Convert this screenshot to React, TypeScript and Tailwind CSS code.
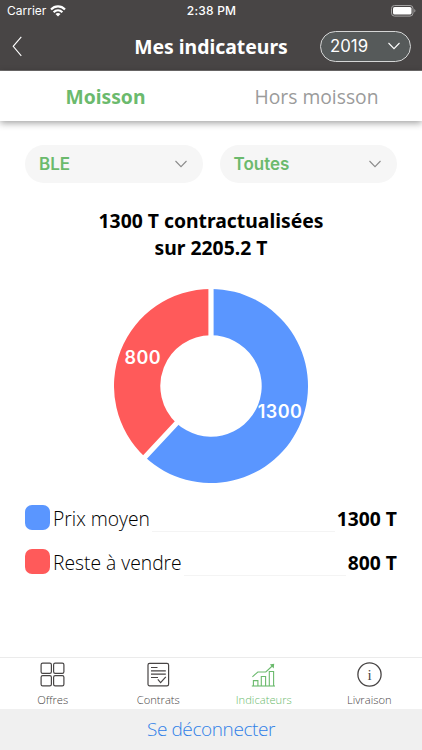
import React, { useState } from 'react';

interface Slice {
  label: string;
  value: number;
  color: string;
  labelX: number;
  labelY: number;
}

const slices: Slice[] = [
  { label: 'Prix moyen', value: 1300, color: '#5a96ff', labelX: 166, labelY: 129.4 },
  { label: 'Reste à vendre', value: 800, color: '#ff5a5a', labelX: 28.7, labelY: 75.4 },
];

const Chevron = ({ className }: { className?: string }) => (
  <svg width="12" height="8" viewBox="0 0 12 8" fill="none" stroke="currentColor" strokeWidth="1.1" className={className}>
    <path d="M0.5 1 L6 6.6 L11.5 1" />
  </svg>
);

const StatusBar = () => (
  <div className="flex h-[21px] items-center justify-between pl-[7px] pr-[6px] font-['Inter','Liberation_Sans',sans-serif] text-[12px] text-white">
    <div className="flex flex-1 items-center gap-1">
      <span>Carrier</span>
      <svg width="16" height="12" viewBox="0 0 16 12" fill="none" stroke="white" strokeWidth="2.2">
        <path d="M1 4.4 C5 0.3 11 0.3 15 4.4" />
        <path d="M3.6 7.2 C6.2 4.7 9.8 4.7 12.4 7.2" />
        <path d="M8 11.6 L5.5 9 C7 7.8 9 7.8 10.5 9 Z" fill="white" stroke="none" />
      </svg>
    </div>
    <span className="font-medium tracking-[0.2px]">2:38 PM</span>
    <div className="flex flex-1 justify-end">
      <svg width="25" height="12" viewBox="0 0 25 12" fill="none">
        <rect x="0.5" y="0.5" width="21.5" height="10.6" rx="3" stroke="#a3a2a2" />
        <rect x="2" y="2" width="18.5" height="7.6" rx="1.6" fill="white" />
        <path d="M23.3 4 C24.8 4.6 24.8 7 23.3 7.6 Z" fill="#a3a2a2" />
      </svg>
    </div>
  </div>
);

const Donut = () => {
  const total = slices.reduce((sum, s) => sum + s.value, 0);
  const point = (angle: number, r: number) => `${97 + r * Math.sin(angle)} ${97 - r * Math.cos(angle)}`;
  let start = 0;

  return (
    <svg width="194" height="194" viewBox="0 0 194 194" className="mx-auto">
      {slices.map((s) => {
        const end = start + (s.value / total) * Math.PI * 2;
        const large = end - start > Math.PI ? 1 : 0;
        const d = `M${point(start, 97)} A97 97 0 ${large} 1 ${point(end, 97)} L${point(end, 50.7)} A50.7 50.7 0 ${large} 0 ${point(start, 50.7)} Z`;
        start = end;
        return <path key={s.label} d={d} fill={s.color} />;
      })}
      {/* gaps between the slices */}
      <path
        d={`M97 0 V50 M${point((slices[0].value / total) * Math.PI * 2, 98)} L${point((slices[0].value / total) * Math.PI * 2, 48)}`}
        stroke="white"
        strokeWidth="5.2"
      />
      {slices.map((s) => (
        <text
          key={s.label}
          x={s.labelX}
          y={s.labelY}
          textAnchor="middle"
          fill="white"
          className="font-['Inter','Liberation_Sans',sans-serif] text-[18px] font-semibold tracking-[0.4px]"
        >
          {s.value}
        </text>
      ))}
    </svg>
  );
};

const navItems = [
  {
    label: 'Offres',
    icon: (
      <g strokeWidth="1.2">
        <rect x="1.1" y="1.1" width="10.3" height="10.3" rx="1.6" />
        <rect x="13.6" y="1.1" width="10.3" height="10.3" rx="1.6" />
        <rect x="1.1" y="13.6" width="10.3" height="10.3" rx="1.6" />
        <rect x="13.6" y="13.6" width="10.3" height="10.3" rx="1.6" />
      </g>
    ),
  },
  {
    label: 'Contrats',
    icon: (
      <g strokeWidth="1.2">
        <rect x="2" y="1.4" width="20.6" height="22.4" rx="1.6" />
        <path d="M5 5.5 H11.5 M5 8.9 H19.8 M5 12.2 H19.8 M5 15.5 H12" />
        <path d="M11.8 17.4 L14.6 20.6 L19.8 14.8" />
      </g>
    ),
  },
  {
    label: 'Indicateurs',
    icon: (
      <g strokeWidth="1.1">
        <path d="M0.8 24 H24" />
        <path d="M2.4 24 V18.6 H6.9 V24 M10.3 24 V14.5 H14.6 V24 M18.3 24 V9.5 H22.6 V24" />
        <path d="M1.4 14.8 L6.8 10 H14.8 L22.3 3" />
        <path d="M20 2.9 L22.6 2.5 L22.3 5.2 Z" fill="currentColor" />
      </g>
    ),
  },
  {
    label: 'Livraison',
    icon: (
      <g>
        <circle cx="12.5" cy="12.5" r="11.6" strokeWidth="1.3" />
        <text x="12.5" y="17.6" textAnchor="middle" fill="currentColor" stroke="none" className="font-['Liberation_Serif',serif] text-[15px]">
          i
        </text>
      </g>
    ),
  },
];

export default function App() {
  const [tab, setTab] = useState('Moisson');
  const [active, setActive] = useState('Indicateurs');

  return (
    <div className="flex h-[750px] w-[422px] flex-col overflow-hidden bg-white font-['Open_Sans','Noto_Sans',sans-serif]">
      <header className="h-[71px] shrink-0 border-b border-[#716f6f] bg-[#484545]">
        <StatusBar />
        <div className="grid h-[50px] grid-cols-[1fr_auto_1fr] items-center">
          <button className="pl-3 text-white">
            <svg width="11" height="21" viewBox="0 0 11 21" fill="none" stroke="currentColor" strokeWidth="1.1">
              <path d="M9.3 0.8 L1.2 10.3 L9.3 19.8" />
            </svg>
          </button>
          <h1 className="pt-px font-['Noto_Sans',sans-serif] text-[19.4px] font-bold text-white">Mes indicateurs</h1>
          <button className="mr-[11px] flex h-[31px] w-[91px] items-center justify-between justify-self-end rounded-full border border-[#d5d6d6] bg-[#565a5a] pl-[9px] pr-[10px] font-['Inter','Liberation_Sans',sans-serif] text-[16.8px] text-white">
            <span className="pt-0.5">2019</span>
            <Chevron />
          </button>
        </div>
      </header>

      <div className="z-10 flex h-[50px] shrink-0 bg-white text-[19.3px] shadow-[0_2px_7px_rgba(0,0,0,0.38)]">
        {['Moisson', 'Hors moisson'].map((name) => (
          <button
            key={name}
            onClick={() => setTab(name)}
            className={`flex-1 pt-0.5 ${tab === name ? "font-['Noto_Sans',sans-serif] font-bold text-[#6bba6d]" : 'text-[#9b9b9b]'}`}
          >
            {name}
          </button>
        ))}
      </div>

      <main className="flex flex-1 flex-col px-[25px] pt-6">
        <div className="flex gap-[17px]">
          {['BLE', 'Toutes'].map((name) => (
            <button
              key={name}
              className="flex h-[38px] flex-1 items-center justify-between rounded-full bg-[#f6f6f6] pl-[14px] pr-4 font-['Inter','Liberation_Sans',sans-serif] text-[17px] font-semibold text-[#6bba6d]"
            >
              <span className="pt-0.5">{name}</span>
              <Chevron className="text-[#8b8b8b]" />
            </button>
          ))}
        </div>

        <h2 className="mt-[25px] mb-7 text-center font-['Noto_Sans',sans-serif] text-[19.35px] leading-[26.5px] font-bold text-black">
          1300 T contractualisées
          <br />
          sur 2205.2 T
        </h2>

        <Donut />

        <div className="mt-[13px] flex flex-col">
          {slices.map((s) => (
            <div key={s.label} className="flex h-11 items-center text-[19.3px] text-black">
              <span className="mr-[3px] mb-px size-[25px] shrink-0 rounded-[7px]" style={{ backgroundColor: s.color }} />
              <span className="mt-0.5 font-light">{s.label}</span>
              <span className="mt-[26px] mx-0.5 h-px flex-1 bg-[#f4f4f4]" />
              <span className="mt-0.5 font-['Noto_Sans',sans-serif] font-bold">{s.value} T</span>
            </div>
          ))}
        </div>
      </main>

      <nav className="flex h-[52px] shrink-0 border-t border-[#ebebeb]">
        {navItems.map((item) => (
          <button
            key={item.label}
            onClick={() => setActive(item.label)}
            className={`flex flex-1 flex-col items-center pt-1 ${active === item.label ? 'text-[#6bba6d]' : 'text-[#484545]'}`}
          >
            <svg width="25" height="25" viewBox="0 0 25 25" fill="none" stroke="currentColor">
              {item.icon}
            </svg>
            <span className="mt-[5px] text-[11.2px] leading-4 font-light">{item.label}</span>
          </button>
        ))}
      </nav>

      <button className="h-[41px] shrink-0 bg-[#f0f0f0] text-[19px] font-light tracking-[-0.4px] text-[#2f80e8]">Se déconnecter</button>
    </div>
  );
}
